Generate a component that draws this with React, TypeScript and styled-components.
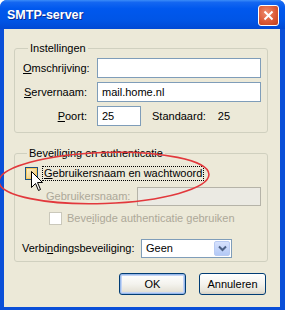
import React from "react";
import styled, { createGlobalStyle } from "styled-components";

const GlobalStyle = createGlobalStyle`
  html, body {
    margin: 0;
    padding: 0;
    background: #ffffff;
  }
  body {
    font-family: "Liberation Sans", Arial, sans-serif;
    font-size: 11px;
    color: #000;
  }
`;

const Window = styled.div`
  position: relative;
  width: 285px;
  height: 310px;
  display: flex;
  flex-direction: column;
  background: #0a4fd8;
  border-radius: 7px 7px 0 0;
  overflow: hidden;
`;

const TitleBar = styled.div`
  height: 29px;
  flex: none;
  display: flex;
  align-items: center;
  justify-content: space-between;
  padding: 0 6px 0 7px;
  background: linear-gradient(
    #3b8cf8 0%,
    #1467f1 8%,
    #0058ee 30%,
    #0055e6 70%,
    #0149d4 100%
  );
`;

const Title = styled.span`
  color: #fff;
  font-weight: bold;
  font-size: 12.5px;
  text-shadow: 1px 1px 0 #0a2a90;
  margin-top: 1px;
`;

const CloseButton = styled.div`
  width: 19px;
  height: 19px;
  border: 1px solid #fff;
  border-radius: 3px;
  background: radial-gradient(circle at 40% 35%, #ef8d6f 0%, #db5a37 55%, #c13f1b 100%);
  display: flex;
  align-items: center;
  justify-content: center;
  margin-top: 1px;
`;

const Client = styled.div`
  flex: 1;
  margin: 0 5px 3px 4px;
  background: #ece9d8;
  padding: 13px 12px 0 10px;
  display: flex;
  flex-direction: column;
`;

const Group = styled.fieldset<{ pt: number; pl: number }>`
  margin: 0;
  min-width: 0;
  border: 1px solid #d0d0bf;
  border-radius: 3px;
  padding: ${({ pt }) => pt}px 6px 3px ${({ pl }) => pl}px;
  & + & {
    margin-top: 14px;
  }
`;

const Legend = styled.legend`
  padding: 0 2px;
  margin-left: 5px;
  line-height: 13px;
`;

const FormGrid = styled.div`
  display: grid;
  grid-template-columns: 64px 1fr;
  column-gap: 10px;
  row-gap: 4px;
  padding-bottom: 3px;
`;

const Label = styled.label<{ disabled?: boolean; w?: number }>`
  line-height: 20px;
  text-align: right;
  white-space: nowrap;
  flex: none;
  width: ${({ w }) => (w ? w + "px" : "auto")};
  text-align: ${({ w }) => (w ? "left" : "right")};
  color: ${({ disabled }) => (disabled ? "#aca899" : "#000")};
`;

const Key = styled.span`
  text-decoration: underline;
`;

const Field = styled.div<{ w?: number; disabled?: boolean; h?: number }>`
  box-sizing: border-box;
  height: ${({ h }) => h ?? 20}px;
  width: ${({ w }) => (w ? w + "px" : "auto")};
  border: 1px solid ${({ disabled }) => (disabled ? "#b5b3a8" : "#7f9db9")};
  background: ${({ disabled }) => (disabled ? "#ebeae3" : "#fff")};
  padding: 0 4px;
  line-height: 18px;
  white-space: nowrap;
`;

const PortRow = styled.div`
  display: flex;
  align-items: center;
`;

const Plain = styled.span<{ ml: number }>`
  margin-left: ${({ ml }) => ml}px;
  line-height: 20px;
`;

const CheckRow = styled.div<{ ml: number; mt: number }>`
  display: flex;
  align-items: center;
  margin-left: ${({ ml }) => ml}px;
  margin-top: ${({ mt }) => mt}px;
  gap: 4px;
`;

const Box = styled.span<{ disabled?: boolean; hover?: boolean }>`
  box-sizing: border-box;
  width: 13px;
  height: 13px;
  flex: none;
  border: 1px solid ${({ disabled }) => (disabled ? "#cac8bb" : "#1c5180")};
  background: ${({ disabled, hover }) =>
    disabled
      ? "#fff"
      : hover
      ? "linear-gradient(135deg, #fdf3d2 0%, #f2d795 60%, #e8b850 100%)"
      : "linear-gradient(135deg, #dcdcd7, #fff)"};
  box-shadow: ${({ hover }) => (hover ? "inset 0 0 0 1px #f9c85a" : "none")};
`;

const Focus = styled.span`
  border: 1px dotted #000;
  padding: 0 1px;
  line-height: 13px;
`;

const CheckText = styled.span<{ disabled?: boolean }>`
  line-height: 13px;
  margin-left: 1px;
  color: ${({ disabled }) => (disabled ? "#aca899" : "#000")};
`;

const FieldRow = styled.div<{ ml: number; mt: number }>`
  display: flex;
  align-items: center;
  margin-left: ${({ ml }) => ml}px;
  margin-top: ${({ mt }) => mt}px;
`;

const Select = styled.div`
  box-sizing: border-box;
  width: 91px;
  height: 19px;
  border: 1px solid #7f9db9;
  background: #fff;
  display: flex;
  align-items: center;
  justify-content: space-between;
  padding: 1px 1px 1px 4px;
`;

const DropButton = styled.span`
  box-sizing: border-box;
  width: 16px;
  height: 15px;
  border: 1px solid #b9cbf3;
  border-radius: 2px;
  background: linear-gradient(#d7e2fd, #b3c9f6);
  display: flex;
  align-items: center;
  justify-content: center;
`;

const ButtonRow = styled.div`
  display: flex;
  justify-content: flex-end;
  gap: 13px;
  margin-top: 11px;
  padding-right: 2px;
`;

const Button = styled.div<{ primary?: boolean }>`
  box-sizing: border-box;
  width: 67px;
  height: 22px;
  border: 1px solid #003c74;
  border-radius: 3px;
  background: linear-gradient(#ffffff 0%, #f4f3ee 50%, #e6e3d8 85%, #d6d0c5 100%);
  box-shadow: ${({ primary }) =>
    primary ? "inset 0 0 0 1px #98b8ea, inset 0 0 0 2px #c3d4f5" : "none"};
  display: flex;
  align-items: center;
  justify-content: center;
`;

const Overlay = styled.svg`
  position: absolute;
  left: 0;
  top: 0;
  pointer-events: none;
`;

const Cursor = styled.svg`
  position: absolute;
  left: 31px;
  top: 171px;
`;

export default function App() {
  return (
    <>
      <GlobalStyle />
      <Window>
        <TitleBar>
          <Title>SMTP-server</Title>
          <CloseButton>
            <svg width="11" height="11" viewBox="0 0 11 11">
              <path d="M1.5 1.5 L9.5 9.5 M9.5 1.5 L1.5 9.5" stroke="#fff" strokeWidth="2" />
            </svg>
          </CloseButton>
        </TitleBar>
        <Client>
          <Group pt={3} pl={8}>
            <Legend>Instellingen</Legend>
            <FormGrid>
              <Label>
                <Key>O</Key>mschrijving:
              </Label>
              <Field />
              <Label>
                <Key>S</Key>ervernaam:
              </Label>
              <Field>mail.home.nl</Field>
              <Label>
                <Key>P</Key>oort:
              </Label>
              <PortRow>
                <Field w={44}>25</Field>
                <Plain ml={11}>Standaard:</Plain>
                <Plain ml={12}>25</Plain>
              </PortRow>
            </FormGrid>
          </Group>
          <Group pt={6} pl={7}>
            <Legend>Beveiliging en authenticatie</Legend>
            <CheckRow ml={3} mt={0}>
              <Box hover />
              <Focus>
                <Key>G</Key>ebruikersnaam en wachtwoord
              </Focus>
            </CheckRow>
            <FieldRow ml={24} mt={5}>
              <Label disabled w={91}>
                Gebruikersnaam:
              </Label>
              <Field w={124} h={19} disabled />
            </FieldRow>
            <CheckRow ml={27} mt={6}>
              <Box disabled />
              <CheckText disabled>
                Beve<Key>i</Key>ligde authenticatie gebruiken
              </CheckText>
            </CheckRow>
            <FieldRow ml={0} mt={13}>
              <Label w={119}>
                Verbi<Key>n</Key>dingsbeveiliging:
              </Label>
              <Select>
                <span>Geen</span>
                <DropButton>
                  <svg width="9" height="7" viewBox="0 0 9 7">
                    <path d="M1 1.5 L4.5 5 L8 1.5" fill="none" stroke="#4d6185" strokeWidth="2" />
                  </svg>
                </DropButton>
              </Select>
            </FieldRow>
          </Group>
          <ButtonRow>
            <Button primary>OK</Button>
            <Button>Annuleren</Button>
          </ButtonRow>
        </Client>
        <Overlay width="285" height="310" viewBox="0 0 285 310">
          <ellipse
            cx="104"
            cy="178"
            rx="105"
            ry="25.5"
            fill="none"
            stroke="#e2383c"
            strokeWidth="1.6"
            transform="rotate(-2 104 178)"
          />
        </Overlay>
        <Cursor width="13" height="21" viewBox="0 0 13 21">
          <path
            d="M0.5 0.5 L0.5 16.5 L4.5 12.5 L7.5 19.5 L9.5 18.5 L6.5 11.5 L11.5 11.5 Z"
            fill="#fff"
            stroke="#000"
            strokeWidth="1"
            strokeLinejoin="miter"
          />
        </Cursor>
      </Window>
    </>
  );
}
